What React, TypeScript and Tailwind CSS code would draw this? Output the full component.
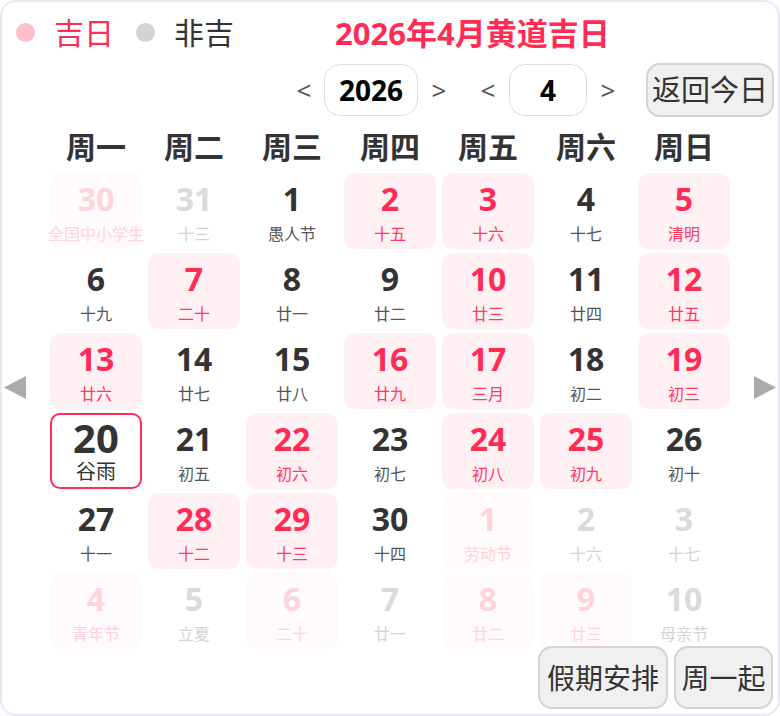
import React from 'react';

type Day = {
  d: number;
  l: string;
  lucky?: boolean;
  other?: boolean;
  today?: boolean;
};

const days: Day[] = [
  { d: 30, l: '全国中小学生', lucky: true, other: true },
  { d: 31, l: '十三', other: true },
  { d: 1, l: '愚人节' },
  { d: 2, l: '十五', lucky: true },
  { d: 3, l: '十六', lucky: true },
  { d: 4, l: '十七' },
  { d: 5, l: '清明', lucky: true },

  { d: 6, l: '十九' },
  { d: 7, l: '二十', lucky: true },
  { d: 8, l: '廿一' },
  { d: 9, l: '廿二' },
  { d: 10, l: '廿三', lucky: true },
  { d: 11, l: '廿四' },
  { d: 12, l: '廿五', lucky: true },

  { d: 13, l: '廿六', lucky: true },
  { d: 14, l: '廿七' },
  { d: 15, l: '廿八' },
  { d: 16, l: '廿九', lucky: true },
  { d: 17, l: '三月', lucky: true },
  { d: 18, l: '初二' },
  { d: 19, l: '初三', lucky: true },

  { d: 20, l: '谷雨', today: true },
  { d: 21, l: '初五' },
  { d: 22, l: '初六', lucky: true },
  { d: 23, l: '初七' },
  { d: 24, l: '初八', lucky: true },
  { d: 25, l: '初九', lucky: true },
  { d: 26, l: '初十' },

  { d: 27, l: '十一' },
  { d: 28, l: '十二', lucky: true },
  { d: 29, l: '十三', lucky: true },
  { d: 30, l: '十四' },
  { d: 1, l: '劳动节', lucky: true, other: true },
  { d: 2, l: '十六', other: true },
  { d: 3, l: '十七', other: true },

  { d: 4, l: '青年节', lucky: true, other: true },
  { d: 5, l: '立夏', other: true },
  { d: 6, l: '二十', lucky: true, other: true },
  { d: 7, l: '廿一', other: true },
  { d: 8, l: '廿二', lucky: true, other: true },
  { d: 9, l: '廿三', lucky: true, other: true },
  { d: 10, l: '母亲节', other: true },
];

const weekdays = ['周一', '周二', '周三', '周四', '周五', '周六', '周日'];

function DayCell({ day }: { day: Day }) {
  if (day.today) {
    return (
      <div className="flex h-[76px] flex-col items-center rounded-[10px] border-2 border-[#ff2d55] bg-white pt-[3px]">
        <div className="text-[40px] font-bold leading-[40px] text-[#333]">
          {day.d}
        </div>
        <div className="mt-[3px] text-[20px] leading-[22px] text-[#333]">
          {day.l}
        </div>
      </div>
    );
  }

  let box = 'flex h-[76px] flex-col items-center rounded-[10px] pt-[8px]';
  let num = 'text-[32px] font-bold leading-[36px] text-[#333]';
  let sub = 'mt-[7px] whitespace-nowrap text-[16px] leading-[20px] text-[#555]';

  if (day.lucky && day.other) {
    box += ' bg-[#fffafb]';
    num = 'text-[32px] font-bold leading-[36px] text-[#ffd3db]';
    sub = 'mt-[7px] whitespace-nowrap text-[16px] leading-[20px] text-[#ffd3db]';
  } else if (day.lucky) {
    box += ' bg-[#fff0f3]';
    num = 'text-[32px] font-bold leading-[36px] text-[#ff2d55]';
    sub = 'mt-[7px] whitespace-nowrap text-[16px] leading-[20px] text-[#ff3a60]';
  } else if (day.other) {
    num = 'text-[32px] font-bold leading-[36px] text-[#dadada]';
    sub = 'mt-[7px] whitespace-nowrap text-[16px] leading-[20px] text-[#d4d4d4]';
  }

  return (
    <div className={box}>
      <div className={num}>{day.d}</div>
      <div className={sub}>{day.l}</div>
    </div>
  );
}

function Arrow({ dir }: { dir: 'left' | 'right' }) {
  return (
    <svg width="22" height="23" viewBox="0 0 22 23">
      {dir === 'left' ? (
        <polygon points="22,0 22,23 0,11.5" fill="#aaaaaa" />
      ) : (
        <polygon points="0,0 0,23 22,11.5" fill="#aaaaaa" />
      )}
    </svg>
  );
}

export default function App() {
  return (
    <div
      className="relative h-[716px] w-[780px] overflow-hidden rounded-[16px] border-2 border-[#e6e9f5] bg-white"
      style={{ fontFamily: '"Noto Sans", "Noto Sans CJK SC", sans-serif' }}
    >
      {/* legend + title */}
      <div className="flex h-[61px] items-center">
        <span className="ml-[14px] h-[19px] w-[19px] rounded-full bg-[#ffc0cb]" />
        <span className="ml-[19px] text-[30px] leading-[36px] text-[#ff2d55]">
          吉日
        </span>
        <span className="ml-[22px] h-[19px] w-[19px] rounded-full bg-[#d3d3d3]" />
        <span className="ml-[19px] text-[30px] leading-[36px] text-[#333]">
          非吉
        </span>
        <span className="ml-[101px] text-[31px] font-bold leading-[36px] text-[#ff2d55]">
          2026年4月黄道吉日
        </span>
      </div>

      {/* year / month nav */}
      <div className="flex h-[54px] items-center pl-[290px]">
        <span className="w-[24px] text-center text-[26px] text-[#555]">&lt;</span>
        <div className="ml-[8px] flex h-[52px] w-[94px] items-center justify-center rounded-[16px] border-[1.5px] border-[#dddddd] text-[28px] font-bold text-black">
          2026
        </div>
        <span className="ml-[9px] w-[24px] text-center text-[26px] text-[#555]">&gt;</span>
        <span className="ml-[25px] w-[24px] text-center text-[26px] text-[#555]">&lt;</span>
        <div className="ml-[9px] flex h-[52px] w-[78px] items-center justify-center rounded-[16px] border-[1.5px] border-[#dddddd] text-[28px] font-bold text-black">
          4
        </div>
        <span className="ml-[9px] w-[24px] text-center text-[26px] text-[#555]">&gt;</span>
        <button className="ml-[26px] flex h-[54px] w-[128px] items-center justify-center rounded-[14px] border-2 border-[#d4d4d4] bg-[#f0f0f0] text-[29px] text-[#333]">
          返回今日
        </button>
      </div>

      {/* calendar body */}
      <div className="mt-[8px] flex">
        <div className="flex w-[48px] items-center justify-start pl-[2px]">
          <Arrow dir="left" />
        </div>
        <div className="w-[680px]">
          <div className="mb-[4px] grid h-[44px] grid-cols-7 gap-x-[6px]">
            {weekdays.map((w) => (
              <div
                key={w}
                className="text-center text-[30px] font-bold leading-[44px] text-[#333]"
              >
                {w}
              </div>
            ))}
          </div>
          <div className="grid grid-cols-7 gap-x-[6px] gap-y-[4px]">
            {days.map((day, i) => (
              <DayCell key={i} day={day} />
            ))}
          </div>
        </div>
        <div className="flex w-[48px] items-center justify-end pr-[2px]">
          <Arrow dir="right" />
        </div>
      </div>

      {/* bottom buttons */}
      <div className="mt-[-3px] flex justify-end gap-[6px] pr-[5px]">
        <button className="flex h-[63px] w-[130px] items-center justify-center rounded-[14px] border-2 border-[#d4d4d4] bg-[#f0f0f0] text-[28px] text-[#333]">
          假期安排
        </button>
        <button className="flex h-[63px] w-[99px] items-center justify-center rounded-[14px] border-2 border-[#d4d4d4] bg-[#f0f0f0] text-[28px] text-[#333]">
          周一起
        </button>
      </div>
    </div>
  );
}
